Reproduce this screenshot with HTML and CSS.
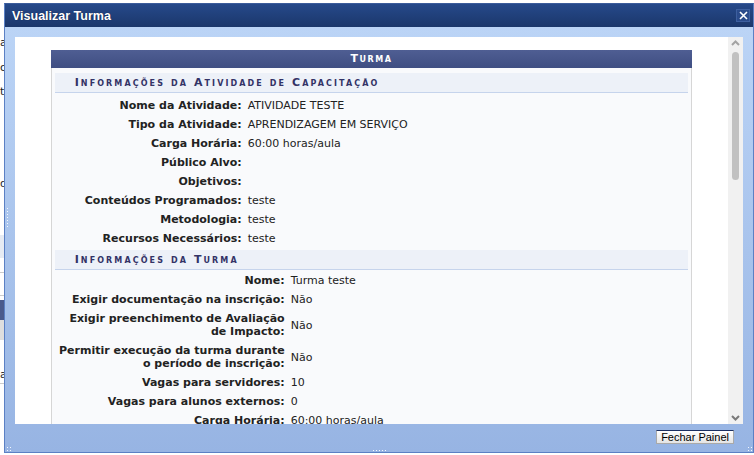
FILE: index.html
```html
<!DOCTYPE html>
<html lang="pt-BR">
<head>
    <meta charset="UTF-8">
    <meta name="viewport" content="width=device-width, initial-scale=1.0">
    <title>Visualizar Turma</title>
    <link rel="stylesheet" href="styles.css">
</head>
<body>

    <!-- pagina por tras do painel -->
    <div class="page">
        <div class="page-text t1">a</div>
        <div class="page-text t2">o</div>
        <div class="page-text t3">t</div>
        <div class="page-text t4">d</div>
        <div class="page-band light"></div>
        <div class="page-rule r1"></div>
        <div class="page-rule r2"></div>
        <div class="page-band dark"></div>
        <div class="page-band grey"></div>
        <div class="page-text t5">a</div>
        <div class="page-rule r3"></div>
    </div>

    <div class="dialog">
        <div class="dialog-title">
            <span>Visualizar Turma</span>
            <button type="button" class="dialog-close" title="Fechar">
                <svg width="9" height="9" viewBox="0 0 9 9">
                    <path d="M1 1 L8 8 M8 1 L1 8" stroke="#fff" stroke-width="1.6"/>
                </svg>
            </button>
        </div>

        <div class="dialog-body">
            <div class="frame">
                <div class="frame-content">
                    <div class="turma">
                        <div class="turma-caption">Turma</div>
                        <div class="turma-body">
                            <div class="subtitle">Informações da Atividade de Capacitação</div>
                            <table class="fields atividade">
                                <tr><th>Nome da Atividade:</th><td>ATIVIDADE TESTE</td></tr>
                                <tr><th>Tipo da Atividade:</th><td>APRENDIZAGEM EM SERVIÇO</td></tr>
                                <tr><th>Carga Horária:</th><td>60:00 horas/aula</td></tr>
                                <tr><th>Público Alvo:</th><td></td></tr>
                                <tr><th>Objetivos:</th><td></td></tr>
                                <tr><th>Conteúdos Programados:</th><td>teste</td></tr>
                                <tr><th>Metodologia:</th><td>teste</td></tr>
                                <tr><th>Recursos Necessários:</th><td>teste</td></tr>
                            </table>

                            <div class="subtitle">Informações da Turma</div>
                            <table class="fields dados-turma">
                                <tr><th>Nome:</th><td>Turma teste</td></tr>
                                <tr><th>Exigir documentação na inscrição:</th><td>Não</td></tr>
                                <tr><th>Exigir preenchimento de Avaliação<br>de Impacto:</th><td>Não</td></tr>
                                <tr><th>Permitir execução da turma durante<br>o período de inscrição:</th><td>Não</td></tr>
                                <tr><th>Vagas para servidores:</th><td>10</td></tr>
                                <tr><th>Vagas para alunos externos:</th><td>0</td></tr>
                                <tr><th>Carga Horária:</th><td>60:00 horas/aula</td></tr>
                            </table>
                        </div>
                    </div>
                </div>

                <div class="scrollbar">
                    <svg class="scroll-arrow" width="15" height="13" viewBox="0 0 15 13">
                        <path d="M4 8 L7.5 4.5 L11 8" fill="none" stroke="#a3a3a3" stroke-width="2"/>
                    </svg>
                    <div class="scroll-track">
                        <div class="scroll-thumb"></div>
                    </div>
                    <svg class="scroll-arrow" width="15" height="13" viewBox="0 0 15 13">
                        <path d="M4 5 L7.5 8.5 L11 5" fill="none" stroke="#7a7a7a" stroke-width="2"/>
                    </svg>
                </div>
            </div>

            <div class="dialog-footer">
                <button type="button" class="btn-fechar">Fechar Painel</button>
            </div>
        </div>

        <span class="grip grip-left"></span>
        <span class="grip grip-bottom"></span>
        <span class="grip grip-corner-left"></span>
        <span class="grip grip-corner-right"></span>
    </div>

</body>
</html>
```

FILE: styles.css
```css
body {
    margin: 0;
    background-color: #fff;
    font-family: "DejaVu Sans", Verdana, sans-serif;
    font-size: 11px;
    color: #222;
    overflow: hidden;
}

/* pagina de fundo */
.page {
    width: 40px;
    padding-top: 36px;
    display: flex;
    flex-direction: column;
}

.page-text {
    height: 13px;
    line-height: 13px;
    color: #222;
}

.t2 { margin-top: 12px; }
.t3 { margin-top: 11px; }
.t4 { margin-top: 79px; }
.t5 { margin-top: 28px; }

.page-band {
    height: 20px;
}

.page-band.light {
    height: 23px;
    margin-top: 45px;
    background-color: #e6ebf3;
}

.page-band.dark {
    margin-top: 4px;
    background-color: #4a5a8c;
}

.page-band.grey {
    background-color: #dedede;
}

.page-rule {
    height: 1px;
    background-color: #ccc;
}

.r1 { margin-top: 14px; }
.r2 { margin-top: 22px; }
.r3 { margin-top: 2px; }

/* painel */
.dialog {
    position: absolute;
    left: 4px;
    top: 3px;
    width: 748px;
    height: 448px;
    border: 1px solid #5b80c4;
    border-top-color: #3b5c9b;
    display: flex;
    flex-direction: column;
}

.dialog-title {
    height: 23px;
    display: flex;
    align-items: center;
    justify-content: space-between;
    padding: 0 3px 0 7px;
    background: linear-gradient(#26498a, #1b376b);
    color: #fff;
    font-family: "Liberation Sans", Arial, sans-serif;
    font-size: 12.5px;
    font-weight: bold;
    text-shadow: 0 0 1px #0d1e40;
}

.dialog-close {
    width: 14px;
    height: 13px;
    padding: 0;
    border: 1px solid #3d5f9f;
    background-color: #2a4b8b;
    display: flex;
    align-items: center;
    justify-content: center;
    cursor: pointer;
}

.dialog-body {
    flex: 1;
    display: flex;
    flex-direction: column;
    background: linear-gradient(#bbd4f6, #97b4e3);
}

.frame {
    height: 387px;
    margin: 10px 10px 0 10px;
    display: flex;
    background-color: #fff;
}

.frame-content {
    flex: 1;
    overflow: hidden;
    padding-top: 13px;
}

/* barra de rolagem */
.scrollbar {
    width: 15px;
    background-color: #f1f1f1;
    display: flex;
    flex-direction: column;
}

.scroll-arrow {
    display: block;
}

.scroll-track {
    flex: 1;
    padding: 2px 4px;
}

.scroll-thumb {
    height: 128px;
    border-radius: 4px;
    background-color: #c1c1c1;
}

.dialog-footer {
    flex: 1;
    display: flex;
    justify-content: flex-end;
    align-items: flex-start;
    padding: 6px 19px 0 0;
}

.btn-fechar {
    height: 14px;
    padding: 0 4px;
    border: 1px solid #a9a9a9;
    border-top: 1px solid #1a2f62;
    background: linear-gradient(#fff, #e4e4e4);
    font-family: "Liberation Sans", Arial, sans-serif;
    font-size: 11px;
    line-height: 12px;
    color: #000;
    cursor: pointer;
}

/* alças de redimensionamento */
.grip {
    position: absolute;
    background-image: radial-gradient(circle, #f4f8ff 0.8px, transparent 1px);
    background-size: 3px 3px;
}

.grip-left {
    left: 1px;
    top: 203px;
    width: 3px;
    height: 21px;
}

.grip-bottom {
    left: 367px;
    bottom: 0;
    width: 15px;
    height: 3px;
}

.grip-corner-left {
    left: 1px;
    bottom: 0;
    width: 6px;
    height: 6px;
}

.grip-corner-right {
    right: 0;
    bottom: 0;
    width: 6px;
    height: 6px;
}

/* tabela da turma */
.turma {
    width: 90%;
    margin: 0 auto;
}

.turma-caption {
    height: 18px;
    line-height: 18px;
    text-align: center;
    background: linear-gradient(#4f5e93, #3f4e82);
    color: #fff;
    font-weight: bold;
    font-variant: small-caps;
    letter-spacing: 1.5px;
}

.turma-body {
    background-color: #f9fafc;
    border-left: 1px solid #d6d6d6;
    border-right: 1px solid #d6d6d6;
    padding: 5px 3px 0 3px;
}

.subtitle {
    padding: 3px 0 3px 20px;
    line-height: 13px;
    background-color: #edf1f8;
    border-bottom: 1px solid #c6d4ec;
    color: #333366;
    font-weight: bold;
    font-variant: small-caps;
    letter-spacing: 2.1px;
}

.fields {
    width: 100%;
    border-collapse: collapse;
    margin: 3px 0 2px 0;
}

.fields th,
.fields td {
    padding: 3px;
    line-height: 13px;
    vertical-align: middle;
}

.fields th {
    text-align: right;
    font-weight: bold;
    white-space: nowrap;
}

.fields td {
    text-align: left;
}

.atividade th {
    width: 184px;
}

.dados-turma th {
    width: 227px;
}

.dados-turma {
    margin-top: 1px;
}
```
